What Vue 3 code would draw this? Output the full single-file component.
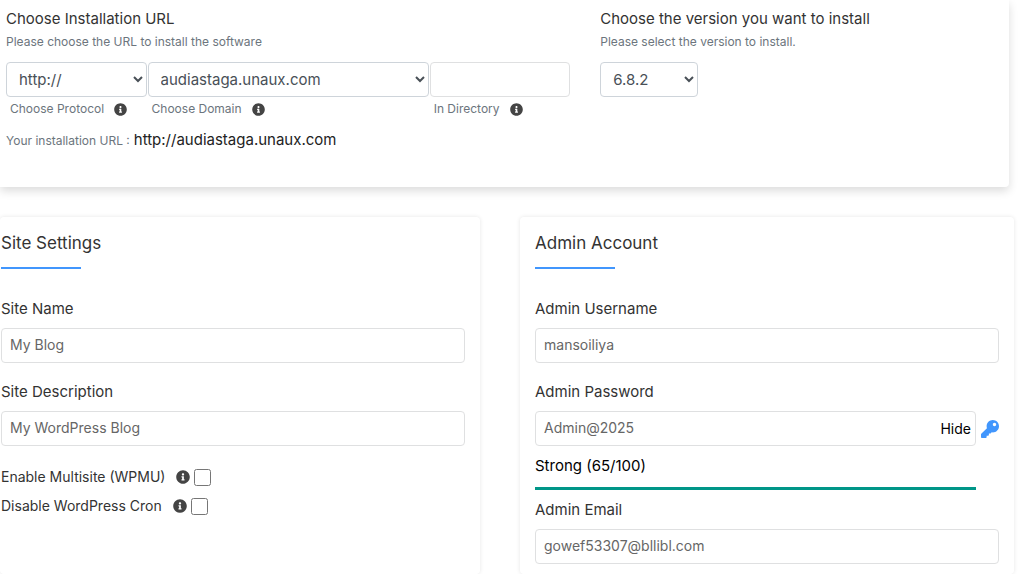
<script setup>
import { ref, h } from 'vue'

const protocol = ref('http://')
const domain = ref('audiastaga.unaux.com')
const directory = ref('')
const version = ref('6.8.2')
const siteName = ref('My Blog')
const siteDescription = ref('My WordPress Blog')
const multisite = ref(false)
const disableCron = ref(false)
const username = ref('mansoiliya')
const password = ref('Admin@2025')
const passwordVisible = ref(true)
const email = ref('gowef53307@bllibl.com')

const infoPath =
  'M256 8C119.043 8 8 119.083 8 256c0 136.997 111.043 248 248 248s248-111.003 248-248C504 119.083 392.957 8 256 8zm0 110c23.196 0 42 18.804 42 42s-18.804 42-42 42-42-18.804-42-42 18.804-42 42-42zm56 254c0 6.627-5.373 12-12 12h-88c-6.627 0-12-5.373-12-12v-24c0-6.627 5.373-12 12-12h12v-64h-12c-6.627 0-12-5.373-12-12v-24c0-6.627 5.373-12 12-12h64c6.627 0 12 5.373 12 12v100h12c6.627 0 12 5.373 12 12v24z'

const InfoIcon = () =>
  h('svg', { viewBox: '0 0 512 512', 'aria-hidden': 'true' }, [h('path', { fill: 'currentColor', d: infoPath })])
</script>

<template>
  <main class="page">
    <section class="card setup">
      <div class="setup-url">
        <h2 class="label">Choose Installation URL</h2>
        <p class="hint">Please choose the URL to install the software</p>
        <div class="url-fields">
          <div class="url-field">
            <select id="protocol" v-model="protocol" class="control select">
              <option>http://</option>
              <option>https://</option>
            </select>
            <label for="protocol" class="caption">Choose Protocol <InfoIcon class="info" /></label>
          </div>
          <div class="url-field">
            <select id="domain" v-model="domain" class="control select">
              <option>audiastaga.unaux.com</option>
            </select>
            <label for="domain" class="caption">Choose Domain <InfoIcon class="info" /></label>
          </div>
          <div class="url-field">
            <input id="directory" v-model="directory" type="text" class="control" />
            <label for="directory" class="caption">In Directory <InfoIcon class="info" /></label>
          </div>
        </div>
        <p class="result">
          <span class="result-label">Your installation URL :</span>
          <span>{{ protocol }}{{ domain }}</span>
        </p>
      </div>
      <div class="setup-version">
        <label for="version" class="label">Choose the version you want to install</label>
        <p class="hint">Please select the version to install.</p>
        <select id="version" v-model="version" class="control select version">
          <option>6.8.2</option>
        </select>
      </div>
    </section>

    <div class="panels">
      <section class="card panel site">
        <h2 class="title">Site Settings</h2>
        <div class="field">
          <label for="site-name" class="label">Site Name</label>
          <input id="site-name" v-model="siteName" type="text" class="control" />
        </div>
        <div class="field">
          <label for="site-description" class="label">Site Description</label>
          <input id="site-description" v-model="siteDescription" type="text" class="control" />
        </div>
        <div class="checks">
          <div class="check">
            <label for="multisite">Enable Multisite (WPMU)</label>
            <InfoIcon class="info" />
            <input id="multisite" v-model="multisite" type="checkbox" />
          </div>
          <div class="check">
            <label for="cron">Disable WordPress Cron</label>
            <InfoIcon class="info" />
            <input id="cron" v-model="disableCron" type="checkbox" />
          </div>
        </div>
      </section>

      <section class="card panel">
        <h2 class="title">Admin Account</h2>
        <div class="field">
          <label for="username" class="label">Admin Username</label>
          <input id="username" v-model="username" type="text" class="control" />
        </div>
        <div class="field password">
          <label for="password" class="label">Admin Password</label>
          <div class="password-row">
            <div class="password-box">
              <input id="password" v-model="password" :type="passwordVisible ? 'text' : 'password'" class="control" />
              <button type="button" class="toggle" @click="passwordVisible = !passwordVisible">
                {{ passwordVisible ? 'Hide' : 'Show' }}
              </button>
            </div>
            <button type="button" class="key" aria-label="Generate a random password">
              <svg viewBox="0 0 512 512" aria-hidden="true">
                <path fill="currentColor" d="M512 176.001C512 273.203 433.202 352 336 352c-11.22 0-22.19-1.062-32.827-3.069l-24.012 27.014A23.999 23.999 0 0 1 261.223 384H224v40c0 13.255-10.745 24-24 24h-40v40c0 13.255-10.745 24-24 24H24c-13.255 0-24-10.745-24-24v-78.059c0-6.365 2.529-12.47 7.029-16.971l161.802-161.802C163.108 213.814 160 195.271 160 176 160 78.798 238.797.001 335.999 0 433.488-.001 512 78.511 512 176.001zM336 128c0 26.51 21.49 48 48 48s48-21.49 48-48-21.49-48-48-48-48 21.49-48 48z" />
              </svg>
            </button>
          </div>
          <div class="strength">Strong (65/100)</div>
        </div>
        <div class="field">
          <label for="email" class="label">Admin Email</label>
          <input id="email" v-model="email" type="text" class="control" />
        </div>
      </section>
    </div>
  </main>
</template>

<style>
html,
body {
  background: #fff;
}
</style>

<style scoped>
.page,
.page * {
  box-sizing: border-box;
}
.page {
  overflow: hidden;
  color: #333;
  font-family: Inter, "Liberation Sans", sans-serif;
  font-size: 14px;
  line-height: 22px;
}
h2,
p {
  margin: 0;
  font-weight: 400;
}
.card {
  background: #fff;
  border-radius: 4px;
}
.setup {
  display: grid;
  grid-template-columns: 58% 1fr;
  margin-right: 10px;
  padding: 8px 0 35px;
  border-radius: 0 0 4px 0;
  box-shadow: 0 4px 10px rgba(0, 0, 0, 0.14);
}
.setup-url {
  padding: 0 15px 0 6px;
}
.setup-version {
  padding-left: 15px;
}
.label {
  display: block;
  font-size: 15px;
  line-height: 22px;
}
.hint {
  margin: 2px 0 10px;
  color: #6c757d;
  font-size: 12px;
  line-height: 20px;
}
.control {
  display: block;
  width: 100%;
  height: 35px;
  padding: 0 8px 2px;
  border: 1px solid #dfe0e1;
  border-radius: 4px;
  outline: 0;
  background: #fff;
  color: #666;
  font-family: inherit;
  font-size: 14px;
}
.select {
  padding: 0 0 0 8px;
  border-color: #ced4da;
  color: #495057;
  font-size: 15px;
}
.version {
  width: 98px;
}
.url-fields {
  display: grid;
  grid-template-columns: 1fr 2fr 1fr;
  gap: 1px;
}
.caption {
  display: flex;
  align-items: center;
  gap: 10px;
  padding: 2px 0 0 4px;
  color: #6c757d;
  font-size: 12px;
  line-height: 20px;
}
.info {
  flex: none;
  width: 13px;
  height: 13px;
  color: #444;
}
.result {
  margin-top: 10px;
  color: #222;
  font-size: 15px;
}
.result-label {
  margin-right: 4px;
  color: #6c757d;
  font-size: 12px;
}
.panels {
  display: grid;
  grid-template-columns: 480fr 494fr;
  gap: 40px;
  margin: 30px 5px 0 0;
}
.panel {
  padding: 14px 15px 10px;
  box-shadow: 0 0 4px rgba(0, 0, 0, 0.1);
}
.site {
  padding-left: 1px;
}
.title {
  margin-bottom: 29px;
  font-size: 17px;
  line-height: 24px;
}
.title::after {
  content: "";
  display: block;
  width: 80px;
  height: 2px;
  margin-top: 12px;
  background: #4196fd;
}
.field {
  margin-bottom: 18px;
}
.field:last-child {
  margin-bottom: 0;
}
.field .label {
  margin-bottom: 8px;
}
.checks {
  display: grid;
  gap: 7px;
  padding-top: 2px;
}
.check {
  display: flex;
  align-items: center;
}
.check .info {
  width: 14px;
  height: 14px;
  margin: 0 4px 0 11px;
}
.check input {
  width: 17px;
  height: 17px;
  margin: 0;
}
.password {
  margin-bottom: 9px;
}
.password-row {
  display: flex;
  align-items: center;
  gap: 5px;
}
.password-box {
  position: relative;
  flex: 1;
}
button {
  padding: 0;
  border: 0;
  background: none;
  font: inherit;
  cursor: pointer;
}
.toggle {
  position: absolute;
  top: 7px;
  right: 5px;
  color: #000;
}
.key {
  width: 18px;
  height: 18px;
  color: #4196fd;
}
.key svg {
  display: block;
}
.strength {
  margin: 9px 23px 0 0;
  padding-bottom: 10px;
  border-bottom: 3px solid #009688;
  color: #000;
  font-size: 15px;
}
</style>
